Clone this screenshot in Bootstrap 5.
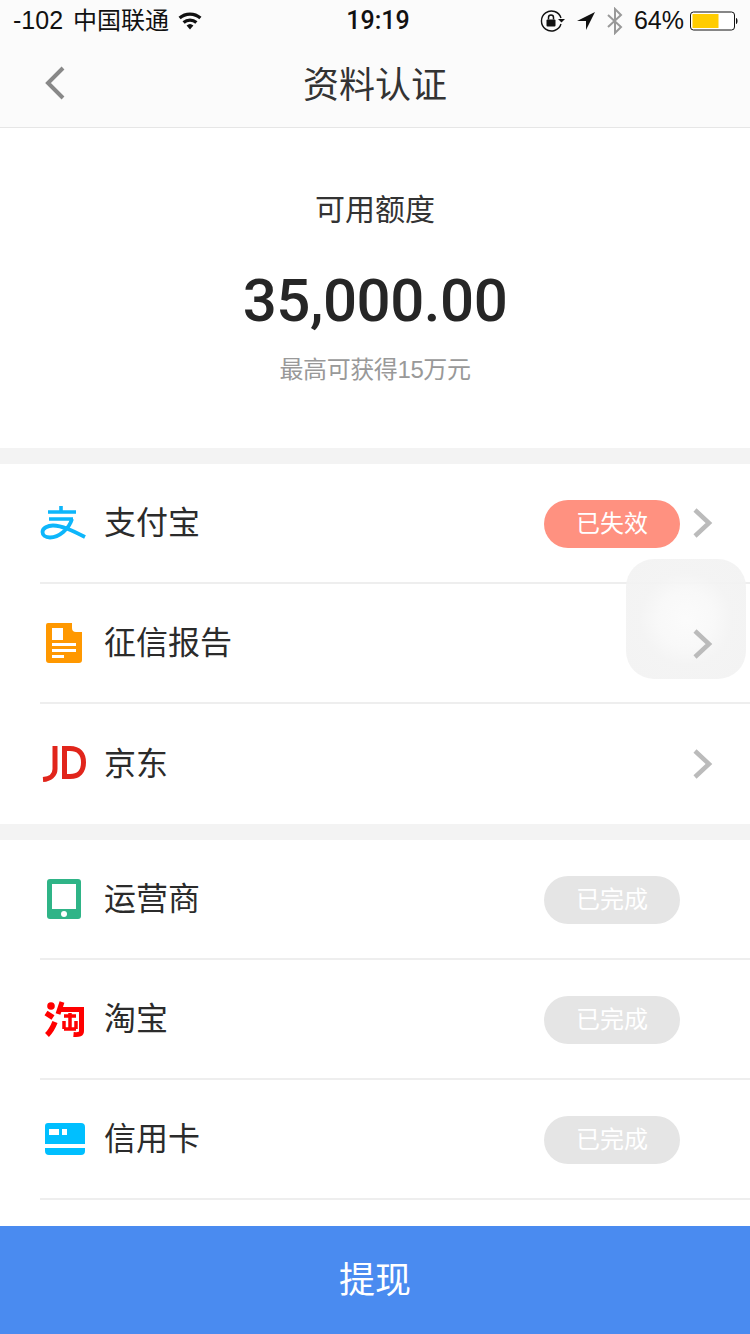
<!DOCTYPE html>
<html lang="zh-CN">
<head>
  <meta charset="UTF-8">
  <title>资料认证</title>
  <link href="https://cdn.jsdelivr.net/npm/bootstrap@5.3.0/dist/css/bootstrap.min.css" rel="stylesheet">
  <style>
    html, body { height: 100%; }
    body {
      margin: 0;
      background: #fff;
      color: #262626;
      font-family: "Liberation Sans", "Noto Sans CJK SC", sans-serif;
      overflow: hidden;
    }
    .phone-page { width: 750px; height: 1334px; position: relative; overflow: hidden; }
    .status-row { height: 40px; background: #fbfbfb; color: #111; font-size: 25px; padding: 2px 12px 0 13px; }
    .carrier-name { font-size: 24px; margin-left: 10px; }
    .status-time { font-family: Roboto, sans-serif; font-weight: 500; position: absolute; left: 6px; right: 0; top: 3px; text-align: center; line-height: 36px; }
    .st-gap { margin-left: 10px; }
    .batt-gap { margin-left: 6px; }
    .head-row { height: 88px; background: #fbfbfb; border-bottom: 1px solid #e6e6e6; position: relative; }
    .head-title { font-size: 36px; color: #333; line-height: 1; padding-top: 4px; }
    .head-back { position: absolute; left: 44px; top: 26px; }
    .quota-box { height: 320px; padding-top: 64px; }
    .quota-label { font-size: 30px; line-height: 36px; color: #333; }
    .quota-amount { font-family: Roboto, sans-serif; font-size: 60px; font-weight: 500; line-height: 70px; margin-top: 38px; color: #262626; letter-spacing: -.45px; }
    .quota-note { font-size: 24px; line-height: 30px; color: #999; margin-top: 19px; letter-spacing: -.4px; }
    .band { height: 16px; background: #f3f3f3; }
    .data-row { height: 120px; margin-left: 40px; border-bottom: 2px solid #eee; padding-right: 36px; }
    .data-row.last-row { border-bottom: 0; }
    .row-icon { width: 48px; height: 48px; margin-right: 17px; flex: none; }
    .row-name { font-size: 32px; color: #2b2b2b; line-height: 1; margin-left: -1px; }
    .state-pill { width: 136px; height: 48px; border-radius: 24px; font-size: 24px; line-height: 48px; color: #fff; text-align: center; margin-right: 34px; margin-top: 2px; }
    .state-bad { background: #ff9180; margin-right: 12px; }
    .state-done { background: #e5e5e5; }
    .row-arrow { width: 22px; height: 32px; flex: none; }
    .touch-box {
      position: absolute; left: 626px; top: 559px; width: 120px; height: 120px; border-radius: 28px;
      background: radial-gradient(circle at 50% 50%, #fbfbfb 0, #f8f8f8 28px, #f3f3f3 46px, #f2f2f2 100%);
      opacity: .93;
    }
    .over-arrow { position: absolute; left: 692px; top: 628px; }
    .cash-btn {
      position: absolute; left: 0; right: 0; bottom: 0; height: 108px; border-radius: 0; border: 0;
      background: #4a8bf0; color: #fff; font-size: 36px; line-height: 108px; padding: 1px 0 0;
    }
  </style>
</head>
<body>
  <div class="phone-page">
    <div class="status-row d-flex align-items-center justify-content-between">
      <div class="d-flex align-items-center">
        <span>-102</span><span class="carrier-name">中国联通</span>
        <svg class="ms-2" width="26" height="20" viewBox="0 0 26 20">
          <path d="M13 18.5 9.6 14.6a5 5 0 0 1 6.8 0z" fill="#111"/>
          <path d="M6.6 11.5a9.6 9.6 0 0 1 12.8 0M2.6 7a15.6 15.6 0 0 1 20.8 0" fill="none" stroke="#111" stroke-width="3.2"/>
        </svg>
      </div>
      <div class="status-time">19:19</div>
      <div class="d-flex align-items-center">
        <svg width="26" height="24" viewBox="0 0 26 24">
          <path d="M21 15a10 10 0 1 1 0-6" fill="none" stroke="#111" stroke-width="1.4"/>
          <path d="M18 10h7l-3.500 3.500z" fill="#111"/>
          <rect x="6.500" y="10.500" width="9" height="7" rx="1" fill="#111"/>
          <path d="M8.500 10.500V8.500a2.500 2.500 0 0 1 5 0v2" fill="none" stroke="#111" stroke-width="1.500"/>
        </svg>
        <svg class="st-gap" width="20" height="20" viewBox="0 0 20 20"><path d="M19 1 10 19V10H1z" fill="#111"/></svg>
        <svg class="st-gap" width="18" height="28" viewBox="0 0 18 28">
          <path d="M2 8 15 20 9 26V2l6 6L2 20" fill="none" stroke="#999" stroke-width="2"/>
        </svg>
        <span class="st-gap">64%</span>
        <svg class="batt-gap" width="48" height="20" viewBox="0 0 48 20">
          <rect x=".5" y="1" width="44" height="18" rx="3" fill="#fff" stroke="#111"/>
          <rect x="2.500" y="3" width="26" height="14" fill="#fc0"/>
          <path d="M46 7c2 .3 2 5.700 0 6z" fill="#111"/>
        </svg>
      </div>
    </div>

    <div class="head-row d-flex align-items-center justify-content-center">
      <svg class="head-back" width="22" height="34" viewBox="0 0 22 34">
        <path d="M19 2 4 17l15 15" fill="none" stroke="#888" stroke-width="4"/>
      </svg>
      <div class="head-title">资料认证</div>
    </div>

    <div class="quota-box text-center">
      <div class="quota-label">可用额度</div>
      <div class="quota-amount">35,000.00</div>
      <div class="quota-note">最高可获得15万元</div>
    </div>

    <div class="band"></div>

    <div class="data-row d-flex align-items-center">
      <svg class="row-icon" viewBox="0 0 48 48">
        <path d="M8 13H36M21 7V13M9 20H33" fill="none" stroke="#0db6fb" stroke-width="3.600"/>
        <path d="M32 20C29 30 19 38.500 10 38.500C5 38.500 2.500 36 2.500 33C2.500 29 8 26.500 13 26.500C22 26.500 33 32 45 38" fill="none" stroke="#0db6fb" stroke-width="3.800"/>
      </svg>
      <span class="row-name flex-grow-1">支付宝</span>
      <span class="state-pill state-bad">已失效</span>
      <svg class="row-arrow" viewBox="0 0 22 32"><path d="M3 3l14 13-14 13" fill="none" stroke="#bbb" stroke-width="4.500"/></svg>
    </div>
    <div class="data-row d-flex align-items-center">
      <svg class="row-icon" viewBox="0 0 48 48">
        <path d="M8 4H32V9a4 4 0 0 0 4 4h6V41a3 3 0 0 1-3 3H9a3 3 0 0 1-3-3V6a2 2 0 0 1 2-2z" fill="#ff9800"/>
        <path d="M12 9h11v12H12zM12 24h24v3H12zM12 30h24v3H12zM12 36h12v3H12z" fill="#fff"/>
      </svg>
      <span class="row-name flex-grow-1">征信报告</span>
    </div>
    <div class="data-row last-row d-flex align-items-center">
      <svg class="row-icon" viewBox="0 0 48 48">
        <path d="M15 6V29C15 35 10 39 3 39.500" fill="none" stroke="#e1251b" stroke-width="5"/>
        <path d="M24.500 8.500H30C39 8.500 43.500 14 43.500 22.500C43.500 31 39 36.500 30 36.500H24.500Z" fill="none" stroke="#e1251b" stroke-width="5"/>
      </svg>
      <span class="row-name flex-grow-1">京东</span>
      <svg class="row-arrow" viewBox="0 0 22 32"><path d="M3 3l14 13-14 13" fill="none" stroke="#bbb" stroke-width="4.500"/></svg>
    </div>

    <div class="band"></div>

    <div class="data-row d-flex align-items-center">
      <svg class="row-icon" viewBox="0 0 48 48">
        <rect x="7" y="4" width="34" height="40" rx="3" fill="#2fb487"/>
        <rect x="12" y="9" width="24" height="25" fill="#fff"/>
        <circle cx="24" cy="39" r="3" fill="#fff"/>
      </svg>
      <span class="row-name flex-grow-1">运营商</span>
      <span class="state-pill state-done">已完成</span>
    </div>
    <div class="data-row d-flex align-items-center">
      <svg class="row-icon" viewBox="0 0 48 48">
        <circle cx="11" cy="11" r="3.800" fill="#f00"/>
        <path d="M6 18l7 4.500M15 27C13 32 11 36 7 40" fill="none" stroke="#f00" stroke-width="5.500"/>
        <path d="M22 7 18 19M20 14.500H41.500V36c0 3-2 4-8 3.500" fill="none" stroke="#f00" stroke-width="5"/>
        <path d="M24 21H36M24 34H36M30 18V34M24 26V34M36 26V34" fill="none" stroke="#f00" stroke-width="3.500"/>
      </svg>
      <span class="row-name flex-grow-1">淘宝</span>
      <span class="state-pill state-done">已完成</span>
    </div>
    <div class="data-row d-flex align-items-center">
      <svg class="row-icon" viewBox="0 0 48 48">
        <path d="M8 8h33a4 4 0 0 1 4 4v17H5V11a3 3 0 0 1 3-3zM5 33h40v3a4 4 0 0 1-4 4H9a4 4 0 0 1-4-4z" fill="#00bfff"/>
        <path d="M9 14h10v6H9zM22 14h5v6h-5z" fill="#fff"/>
      </svg>
      <span class="row-name flex-grow-1">信用卡</span>
      <span class="state-pill state-done">已完成</span>
    </div>

    <div class="touch-box"></div>
    <svg class="row-arrow over-arrow" viewBox="0 0 22 32"><path d="M3 3l14 13-14 13" fill="none" stroke="#bbb" stroke-width="4.500"/></svg>
    <button type="button" class="btn cash-btn">提现</button>
  </div>
  <script src="https://cdn.jsdelivr.net/npm/bootstrap@5.3.0/dist/js/bootstrap.bundle.min.js"></script>
</body>
</html>
